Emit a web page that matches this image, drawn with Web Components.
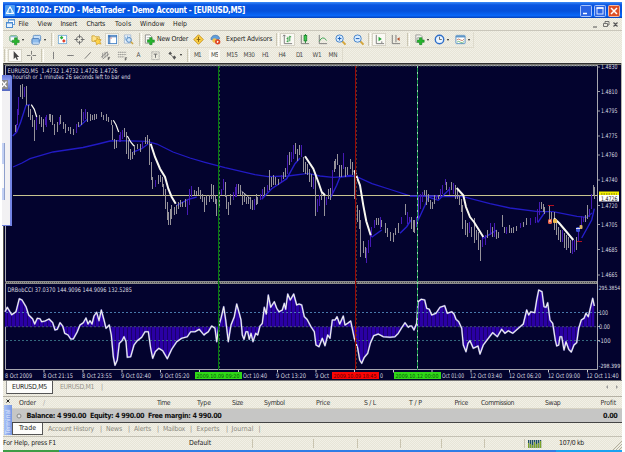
<!DOCTYPE html>
<html lang="en">
<head>
<meta charset="utf-8">
<title>MetaTrader</title>
<style>
  html, body { margin: 0; background: #fff; }
  body {
    width: 625px;
    height: 452px;
    overflow: hidden;
    font: 6.9px/1 "DejaVu Sans Condensed", "DejaVu Sans", sans-serif;
    color: #1c1c1c;
  }
</style>
</head>
<body>
<app-window></app-window>

<script>
const attach = (el, html) => {
  const tpl = document.createElement("template");
  tpl.innerHTML = html;
  el.attachShadow({ mode: "open" }).appendChild(tpl.content.cloneNode(true));
};

// Text squeezed or spread with letter-spacing until it fills its width
class FitText extends HTMLElement {
  constructor() {
    super();
    attach(this, `
      <style>
        :host { display: inline-block; flex: none; white-space: nowrap; }
        span { display: inline-block; }
      </style>
      <span><slot></slot></span>
    `);
  }

  connectedCallback() {
    const w = Number(this.getAttribute("w"));
    const span = this.shadowRoot.querySelector("span");
    this.style.width = w + "px";
    const n = this.textContent.length;
    const diff = w - span.getBoundingClientRect().width;
    if (n > 1) span.style.letterSpacing = (diff / n).toFixed(3) + "px";
  }
}

// [start, end, text] items become a flow row, each one spaced from the last
const textRow = (items, from) => {
  let pos = from;
  return items.map(([a, b, text, cls]) => {
    const html = `<fit-text class="${cls || ""}" w="${b - a}" style="margin-left:${a - pos}px">${text}</fit-text>`;
    pos = b;
    return html;
  }).join("");
};

const PLUS = (x, y) => `<path d="M${x} ${y}h2.6v2.5h2.5v2.6h-2.5v2.5h-2.6v-2.5h-2.5v-2.6h2.5z" fill="#27b52c" stroke="#138020" stroke-width=".6"/>`;

const ICONS = {
  newchart: `<rect x="1" y="2" width="8" height="6" rx="1" fill="#fff" stroke="#4c9a6a"/><path d="M2 3h6" stroke="#7fb2dc"/>` + PLUS(6, 4.2),
  profiles: `<rect x="2.5" y="1.5" width="8" height="6" rx="1" fill="#c7e0f8" stroke="#5e8fc6"/><rect x="1" y="5" width="8" height="6" rx="1" fill="#8fbcec" stroke="#4778b8"/><path d="M2 10h7" stroke="#e8f3ff"/>`,
  market: `<rect x="1.5" y="1.5" width="9" height="9" fill="#fff" stroke="#7aaed8"/><path d="M3 4l2-2 2 2-2 2z" fill="#2cac3a"/><path d="M5.5 7.5l2-2 2 2-2 2z" fill="#e0422c"/>`,
  data: `<circle cx="6" cy="6" r="3.5" fill="none" stroke="#777"/><path d="M6 .5v4M6 7.5v4M.5 6h4M7.5 6h4" stroke="#666"/>`,
  navigator: `<path d="M1 2h3l1 1h4v5H1z" fill="#ffe48c" stroke="#c79a23" stroke-width=".8"/><path d="M6.5 4l1.500 2.200 3-.2-1.300 2.500 1.300 2.500-2.800-.5-2.300 1.200-.3-2.600-1.800-1.800 2.400-.5z" fill="#ffd54a" stroke="#c08a14" stroke-width=".6"/>`,
  terminal: `<rect x="1.5" y="1.5" width="9" height="9" fill="#fff" stroke="#3f7fc4"/><path d="M3 1.5v9M1.5 3h9" stroke="#2d62ac"/><path d="M4 4.5h1" stroke="#d33"/>`,
  tester: `<path d="M1.5 1h7v9h-7z" fill="#eef5fc" stroke="#8ca8c8" stroke-width=".7"/><path d="M3 3v4M5 2v4M7 3v3" stroke="#4b8ec9" stroke-width=".7"/><circle cx="6.5" cy="6.5" r="2.6" fill="#cfe6fb" stroke="#4a7fb9"/><path d="M8.5 8.5l2.5 2.5" stroke="#c9a13a" stroke-width="1.5"/>`,
  order: `<path d="M1.5 1h5l2 2v7h-7z" fill="#fff" stroke="#777" stroke-width=".8"/><path d="M3 4h4M3 6h3" stroke="#999" stroke-width=".7"/>` + PLUS(6.2, 4),
  meta: `<path d="M6 .8l5.2 5.2L6 11.2.8 6z" fill="#fbd046" stroke="#c99315"/><path d="M6 3v3M4 6h4M6 6v2.6" stroke="#845f10"/>`,
  expert: `<path d="M1 6c0-6 9-6 9.500-1L8 7z" fill="#5f9edb" stroke="#356aa8" stroke-width=".7"/><circle cx="5" cy="7" r="2.500" fill="#f3c04b"/><circle cx="8.400" cy="8.500" r="2.900" fill="#dd4420"/><path d="M7.500 7v3l2.300-1.500z" fill="#fff"/>`,
  bars: `<path d="M2.500 1v9.500H11M1 2.500L2.500 1 4 2.500" fill="none" stroke="#777"/><path d="M5 5h1.500M6.500 3v6M8.500 2v6M8.500 3H10M6.500 8H5" stroke="#27983a"/>`,
  candles: `<path d="M2.500 1v9.500H11" fill="none" stroke="#777"/><path d="M7 0v10" stroke="#167c28"/><rect x="5.500" y="1.500" width="3" height="6" fill="#3fca4e" stroke="#167c28" stroke-width=".8"/>`,
  line: `<path d="M2.500 1v9.500H11" fill="none" stroke="#777"/><path d="M2.500 8Q6 1 10.500 7" fill="none" stroke="#35a04a"/>`,
  zoomin: `<path d="M7.500 7.500l4 4" stroke="#d2a234" stroke-width="2"/><circle cx="5" cy="5" r="4" fill="#d9edff" stroke="#3f7fc8"/><path d="M5 3v4M3 5h4" stroke="#1e62ba" stroke-width="1.100"/>`,
  zoomout: `<path d="M7.500 7.500l4 4" stroke="#d2a234" stroke-width="2"/><circle cx="5" cy="5" r="4" fill="#d9edff" stroke="#3f7fc8"/><path d="M3 5h4" stroke="#1e62ba" stroke-width="1.100"/>`,
  scroll: `<path d="M2.500 1v9.500H11M8.500 10V8" fill="none" stroke="#777"/><path d="M5 3v5l3.500-2.500z" fill="#22a535"/>`,
  shift: `<path d="M2.500 1v9.500H11M6.500 1v8" fill="none" stroke="#777"/><path d="M10.500 3.500v4L7.500 5.500z" fill="#b5502c"/>`,
  indicators: `<path d="M2 1h5l2 2v6H2z" fill="#f3f3ee" stroke="#888" stroke-width=".8"/><path d="M3 6q1.500-5 3 0" fill="none" stroke="#777" stroke-width=".7"/>` + PLUS(6, 4),
  period: `<circle cx="6" cy="6" r="4.600" fill="#eaf5ff" stroke="#2f6fc9" stroke-width="1.500"/><path d="M6 3v3h2.500" fill="none" stroke="#555" stroke-width=".9"/>`,
  template: `<rect x="1" y="1.500" width="10" height="9" rx=".6" fill="#fff" stroke="#568fc4"/><path d="M1 3h10" stroke="#568fc4" stroke-width="1.500"/><path d="M2 6.500q2-2 4 0t4-1" fill="none" stroke="#b95b38" stroke-width=".8"/><path d="M2 9q2-2 4 0t4-1" fill="none" stroke="#3f9e4d" stroke-width=".8"/>`,
  cursor: `<path d="M4 1v9l2-2 1.500 3 1.300-.7L7.400 7.500H10z" fill="#444"/>`,
  cross: `<path d="M6 1v4M6 7v4M1 6h4M7 6h4" stroke="#666" stroke-width=".9"/>`,
  vline: `<path d="M6 2v8" stroke="#777"/>`,
  hline: `<path d="M2.500 6h7" stroke="#777"/>`,
  trend: `<path d="M3 9.500L9.500 2.500" stroke="#777"/>`,
  channel: `<path d="M1 8l7-6M3 10l7-6M3 3v6M5.500 2v6M8 2v5" stroke="#777" stroke-width=".8"/><path d="M9 11V8h2M9 9.500h1.500" fill="none" stroke="#444" stroke-width=".8"/>`,
  fibo: `<path d="M1 2.500h9M1 5h9M1 7.500h7" stroke="#777" stroke-width=".8" stroke-dasharray="1.500 .5"/><path d="M9 11.500v-3h2M9 10h1.500" fill="none" stroke="#444" stroke-width=".8"/>`,
  label: `<rect x="2" y="2" width="8" height="8.500" fill="none" stroke="#888" stroke-width=".8" stroke-dasharray="1 .6"/><path d="M4 4.500h4M6 4.500v4" stroke="#666"/>`,
  arrows: `<path d="M1.500 4l2-2.500 2 2.500-2 1.500zM6 8l2-2 2 2-2 2.500z" fill="#555"/><path d="M4 5l3 3" stroke="#666" stroke-width=".8"/>`
};

class ToolIcon extends HTMLElement {
  constructor() {
    super();
    attach(this, `
      <style>
        :host { display: flex; flex: none; align-items: center; justify-content: center; height: 13px; box-sizing: border-box; }
        :host([pressed]) { background: #faf9f4; border: 1px solid #d6d3c6; }
        svg { flex: none; overflow: visible; }
        i { flex: none; margin-left: 2px; border: 1.5px solid transparent; border-top: 2px solid #222; border-bottom: 0; }
      </style>
      <svg width="11" height="11" viewBox="0 0 12 12"></svg>
    `);
  }

  connectedCallback() {
    this.style.width = this.getAttribute("w") + "px";
    this.shadowRoot.querySelector("svg").innerHTML = ICONS[this.getAttribute("name")];
    if (this.hasAttribute("drop")) this.shadowRoot.append(document.createElement("i"));
  }
}

class ToolGrip extends HTMLElement {
  constructor() {
    super();
    attach(this, `
      <style>
        :host { display: flex; flex: none; justify-content: center; width: 6px; height: 13px; gap: 1px; }
        b { width: 1px; background: #cbc7b4; }
        b + b { background: #fdfcf6; }
      </style>
      <b></b><b></b>
    `);
  }
}

class TitleBar extends HTMLElement {
  constructor() {
    super();
    attach(this, `
      <style>
        :host {
          display: flex;
          align-items: center;
          box-sizing: border-box;
          height: 16px;
          padding: 1px 2px 0 2px;
          background: linear-gradient(#3c8cf8 0, #0a55e2 18%, #0450da 55%, #0867f8 85%, #0640b8 100%);
          color: #fff;
          font-size: 8px;
          font-weight: bold;
        }
        .logo { margin-right: 1px; }
        fit-text { padding-top: 1px; }
        .buttons { display: flex; gap: 2px; margin-left: auto; }
        .buttons svg { background: #2b64e4; border: 1px solid #a8c4fa; border-radius: 1.5px; }
        .buttons svg:last-child { background: #de4f25; border-color: #f3b9a2; }
      </style>
      <svg class="logo" width="10" height="11" viewBox="0 0 10 11"><rect width="10" height="11" rx="1" fill="#4c9cf4"/><path d="M5 1.500l3.800 7H1.200z" fill="#9ed4ff" stroke="#fff"/><path d="M5 4v4" stroke="#1663bd"/></svg>
      <fit-text w="229">7318102: FXDD - MetaTrader - Demo Account - [EURUSD,M5]</fit-text>
      <div class="buttons">
        <svg width="10" height="10" viewBox="0 0 10 10"><path d="M2 7.500h4" stroke="#fff" stroke-width="1.600"/></svg>
        <svg width="10" height="10" viewBox="0 0 10 10"><rect x="2" y="2" width="6" height="6" fill="none" stroke="#dbe7ff"/><path d="M1.500 2h7" stroke="#fff" stroke-width="1.500"/></svg>
        <svg width="10" height="10" viewBox="0 0 10 10"><path d="M2 2l6 6M8 2L2 8" stroke="#fff" stroke-width="1.500"/></svg>
      </div>
    `);
  }
}

class MenuBar extends HTMLElement {
  constructor() {
    super();
    attach(this, `
      <style>
        :host { display: flex; align-items: center; box-sizing: border-box; height: 13px; padding: 0 1px 0 3px; border-bottom: 1px solid #c9c6ba; }
        fit-text { padding-top: 1px; }
        .mdi { margin-left: auto; }
      </style>
      <svg width="9" height="10" viewBox="0 0 9 10"><rect x="2.500" y=".5" width="6" height="5" fill="#fff" stroke="#68a0dc"/><rect x=".5" y="3.500" width="6" height="5" fill="#e6f3ff" stroke="#4d8bd0"/><path d="M1 4h6M3 1h6" stroke="#4d8bd0"/></svg>
      ${textRow([[18.5, 28.5, "File"], [37.5, 52, "View"], [60.5, 77, "Insert"], [86.5, 105, "Charts"],
        [115, 131.5, "Tools"], [140, 164.5, "Window"], [173, 187, "Help"]], 15)}
      <svg class="mdi" width="29" height="9" viewBox="0 0 29 9"><g fill="none" stroke="#555"><path d="M1 7h4M21.500 2.500l4 4M25.500 2.500l-4 4" stroke-width="1.200"/><path d="M11.500 3.500h4v3h-4zM13 3V1.500h4V5h-1" stroke-width=".8"/></g></svg>
    `);
  }
}

class ToolBars extends HTMLElement {
  constructor() {
    super();
    const icon = (name, w, attrs = "") => `<tool-icon name="${name}" w="${w}" ${attrs}></tool-icon>`;
    attach(this, `
      <style>
        :host { display: flex; flex-direction: column; box-sizing: border-box; height: 31px; padding-top: 1px; }
        div { display: flex; align-items: center; height: 16px; box-sizing: border-box; border-bottom: 1px solid #e0dccd; border-right: 1px solid #dedbcd; width: max-content; padding-left: 2px; }
        div + div { height: 14px; padding-left: 0; border-bottom: 0; font-size: 6.4px; color: #4c4c4c; }
        .a { width: 17px; text-align: center; }
        .on { background: #faf9f4; outline: 2.500px solid #faf9f4; }
      </style>
      <div>
        ${icon("newchart", 22, "drop")}${icon("profiles", 22, "drop")}<tool-grip></tool-grip>
        ${icon("market", 15)}${icon("data", 18)}${icon("navigator", 17)}${icon("terminal", 14, "pressed")}${icon("tester", 18)}<tool-grip></tool-grip>
        ${icon("order", 13)}<fit-text w="31" style="margin-left:1px">New Order</fit-text>
        ${icon("meta", 20)}${icon("expert", 15)}<fit-text w="46" style="margin-left:3px">Expert Advisors</fit-text><tool-grip style="margin-left:2px"></tool-grip>
        ${icon("bars", 15, "pressed")}${icon("candles", 18)}${icon("line", 18)}${icon("zoomin", 19)}${icon("zoomout", 16)}<tool-grip></tool-grip>
        ${icon("scroll", 14, "pressed")}${icon("shift", 19)}<tool-grip></tool-grip>
        ${icon("indicators", 20, "drop")}${icon("period", 21, "drop")}${icon("template", 21, "drop")}
      </div>
      <div>
        <tool-grip style="width:5px"></tool-grip>${icon("cursor", 14, "pressed")}${icon("cross", 19)}<tool-grip style="width:3px"></tool-grip>
        ${icon("vline", 18)}${icon("hline", 17)}${icon("trend", 17)}${icon("channel", 18)}${icon("fibo", 16)}
        <span class="a">A</span>${icon("label", 17)}${icon("arrows", 21, "drop")}<tool-grip></tool-grip>
        ${textRow([[194, 200.5, "M1"], [211, 218, "M5", "on"], [226.5, 237.5, "M15"], [243.5, 254.5, "M30"], [262, 268.5, "H1"],
          [278.5, 285.5, "H4"], [296, 302, "D1"], [312.5, 321.5, "W1"], [328.5, 337.5, "MN"]], 191)}
        <span style="width:4px"></span>
      </div>
    `);
  }
}

// Series are stored in thirds of a pixel; ox/oy is the origin of each stretch.
const SUB = 3;
const pts = (ox, oy, s) => s.trim().split(/\s+/).map(p => {
  const [x, y] = p.split(",").map(Number);
  return [ox + x / SUB, oy + y / SUB];
});
const toPath = list => "M" + list.map(([x, y]) => x.toFixed(1) + " " + y.toFixed(1)).join("L");

// x:high-low, a trailing p marks a rising (violet) bar
const BARS = [
  [0, 62, `46:190-210 49:185-212p 52:140-190p 56:105-160p 62:70-105 67:67-110 74:75-105p 80:72-130 84:130-165 90:140-175 96:160-195 104:175-238 110:165-205p 117:158-185 123:165-195 130:170-210 136:165-190p 140:160-195p 147:155-175 152:155-180 158:160-190 164:185-218 172:180-210 178:165-190p 182:160-185 190:180-200 197:185-212 205:195-208 212:195-215 220:200-218 228:185-212p 236:180-195 243:140-190 250:150-178p 257:140-170p 262:150-180 270:155-178 276:160-175 284:155-175 290:155-172 303:150-165 310:158-175 318:155-178 325:165-180 333:175-190 338:188-235 344:230-262 350:235-258 357:220-240p 362:210-240p 368:205-230p 373:198-225 378:210-275 384:235-290 391:262-295 397:270-290 404:250-280 412:245-262 420:245-270 428:240-258p 436:225-245 443:218-245 448:230-310 453:300-355 458:345-382 466:355-375p 474:340-365 480:338-360 486:345-375 491:365-400 496:380-440 501:420-475 504:450-490 510:440-490 515:430-470 522:435-458 528:428-455 534:420-440 540:415-435 547:420-435 555:410-435 562:410-460p 568:380-430p 575:372-405p 582:385-400 590:388-400 596:375-400 602:385-410 608:395-420 613:405-450 619:400-430`],
  [205, 62, `5:400-415 12:400-420 20:365-410 25:370-420 30:400-425 34:410-462 42:390-435 48:380-400p 54:350-385p 60:360-405 65:400-440 70:420-458 76:395-430 85:390-415p 90:375-405p 94:365-405p 100:365-395 105:370-400 111:390-430 117:395-420 123:405-425 129:405-425 135:405-440 141:415-445 147:410-445p 153:395-430 158:405-425 165:395-415p 172:380-410p 178:375-400 186:370-390p 192:325-385 198:345-375 205:338-370 212:345-368 220:350-370 228:340-362p 236:330-350 240:318-345 246:280-335p 252:270-310 258:270-300p 264:250-290p 270:243-275 277:260-298 284:250-280 290:248-285p 296:285-330 302:300-335 308:305-340 314:320-360 320:335-375 326:345-380p 332:335-462 338:410-450p 344:400-432p 350:385-415 358:395-463 364:405-430p 370:380-410 376:378-415 382:325-400p 387:298-330 392:290-320 397:275-310 403:310-345 409:310-345 415:272-320p 421:315-345 428:315-340 436:292-320 442:300-340 447:325-410 452:395-435 457:430-480 463:445-500 515:467-490 525:465-500p 590:465-485p 600:427-460 607:450-485p 613:465-480p`],
  [205, 220, `466:0-112 474:62-100 480:80-115 485:85-130p 490:60-100p 495:40-80p 500:20-50p 508:0-25p 520:-5-15 530:0-20 540:10-40 548:25-50 555:35-62 565:38-65 572:25-45 580:10-40 590:-3-12p 618:0-20 625:0-35`],
  [410, 62, `5:465-500 25:400-470p 30:395-440p 36:390-420p 42:385-400 48:385-430 54:395-420 60:415-440 66:420-442 72:400-425 78:400-415p 85:400-410 90:380-405p 97:370-395p 105:350-370p 110:360-385 117:375-400p 123:360-385 129:362-395p 135:370-410 141:385-410 147:400-430 153:410-450 158:430-500 277:458-490 383:440-480p 388:420-460p 393:420-440 400:425-450 404:435-455 418:430-480 424:450-475 432:450-504 515:462-500p 520:465-480p 527:460-480 533:430-470 538:440-465p 543:395-440p 549:370-400 553:375-410`],
  [410, 220, `12:0-40 18:-10-20p 167:0-45 172:10-50 178:5-40p 185:20-50 194:-5-68 200:30-60 206:35-90 211:60-122 217:50-80p 225:45-75p 232:30-55 240:10-45p 246:20-50 252:10-50p 260:30-58 266:35-55 277:-10-20 284:20-40 290:20-42p 297:15-40 304:25-40 310:20-38 320:18-32 330:10-25p 340:5-20 350:-5-15 360:-5-15p 375:-10-10p 438:5-45 444:20-60 450:30-65 458:30-65p 464:40-85 470:45-90 476:50-85 481:60-100 487:60-103p 492:60-95p 498:50-90 505:30-65p`]
];

const SLOW = [
  [13, 167], [22, 163], [30, 158.7], [53, 152], [83, 147.5], [98, 144], [110, 141], [120, 140.7], [147, 141.3], [157, 144], [173, 152],
  [190, 158], [205, 162.300], [225, 167.700], [255, 174.700], [268, 176.700], [288, 176], [308, 173.300], [320, 176], [333, 177.300],
  [355, 176], [372, 183.700], [392, 190], [410, 195.800], [437, 196.700], [463, 196.700], [490, 203.700], [510, 208], [538, 211.700],
  [553, 211.700], [577, 216.300], [587, 217.300], [592, 213]
];

const FALLING = [
  pts(0, 62, "94,128 103,142 110,165"), pts(0, 62, "340,175 348,188 356,210"), pts(0, 62, "382,222 392,240 402,252"),
  pts(0, 62, "452,245 465,285 480,320 495,345 505,380 515,405 527,425"),
  pts(205, 62, "300,283 325,320 340,360 350,390 360,400"),
  pts(205, 62, "448,325 465,370 475,430 484,478 497,520"),
  pts(410, 62, "140,378 160,400 168,435 180,465 192,480 220,525"),
  pts(410, 220, "432,-5 448,10 465,30 490,60")
];

const RISING = [
  pts(0, 62, "38,222 50,210 62,180 78,130 90,128"), pts(0, 62, "236,195 262,172"), pts(0, 62, "400,270 425,260 445,245"),
  pts(0, 62, "530,430 565,412 590,405"), pts(205, 62, "170,412 200,380 245,350 270,305 285,288"),
  pts(205, 62, "375,410 395,370 405,345 440,340"), pts(205, 220, "500,52 530,30"), pts(205, 220, "585,40 605,20 618,0"),
  pts(410, 62, "22,480 45,430 55,405 85,415 110,390 120,380"), pts(410, 62, "0,402 85,402"),
  pts(410, 220, "220,55 260,30"), pts(410, 62, "383,482 405,450"), pts(410, 62, "515,528 545,474 553,440")
];

const CCI = [
  ...pts(0, 220, `15,275 22,262 35,284 48,275 58,236 66,240 78,260 86,285 98,297 104,312 112,295 120,296 125,305 135,303 147,297 158,308 165,330 172,328 180,308 188,318 194,340 204,345 212,357 220,357 232,335 240,315 250,308 258,294 264,312 270,302 276,312 282,288 290,277 297,302 304,270 312,300 318,325 328,315 334,345 340,410 345,436 352,420 358,370 366,362 372,350 378,365 382,412 392,410 402,375 412,362 425,352 435,335 445,335 452,385 458,415 466,395 476,385 488,392 502,416 515,388 530,365 545,355 562,350 572,335 585,335 598,328 612,345`),
  ...pts(205, 220, `0,342 10,335 20,318 30,325 35,365 42,315 48,295 56,260 62,300 70,365 78,315 88,290 95,252 103,280 108,300 112,345 117,358 123,335 128,335 133,358 138,340 144,365 152,340 158,345 165,318 172,310 178,262 184,282 190,225 197,262 208,245 215,265 222,275 232,270 238,250 242,268 248,222 256,240 266,222 275,255 282,252 290,255 298,290 306,298 318,320 328,335 333,375 342,380 352,355 360,377 368,345 375,355 382,300 390,300 396,290 404,312 415,288 420,315 428,310 437,303 448,355 458,385 464,420 470,430 478,412 488,400 496,370 506,347 520,342 535,350 555,352 570,350 580,340 592,320 600,308 610,322`),
  ...pts(410, 220, `0,318 5,318 12,330 20,310 24,245 34,238 44,240 50,265 58,268 65,285 78,280 90,262 104,257 112,280 125,275 132,282 138,298 146,305 155,325 160,375 168,395 174,370 180,362 190,385 204,378 210,402 220,375 235,355 248,338 262,350 275,328 285,340 295,332 308,340 325,325 340,312 350,270 356,285 362,275 374,278 380,240 386,210 396,215 402,260 408,262 413,248 420,300 428,310 436,360 440,378 446,375 450,350 455,350 462,390 468,365 476,388 484,396 492,375 500,368 506,325 514,300 522,295 528,280 535,290 542,260 548,235 553,258`)
];

class PriceChart extends HTMLElement {
  constructor() {
    super();
    attach(this, `
      <style>
        :host { display: block; height: 318px; background: #03032e; }
        svg { display: block; }
        text { font: 6.300px "DejaVu Sans Condensed", "DejaVu Sans", sans-serif; fill: #d4d4d8; }
      </style>
      <svg width="619" height="318" viewBox="3 62 619 318">${this.draw()}</svg>
    `);
  }

  text(x, y, w, str, fill = "#dcdce0", size = 6.3) {
    return `<text x="${x}" y="${y}" textLength="${w}" lengthAdjust="spacingAndGlyphs" style="fill:${fill};font-size:${size}px">${str}</text>`;
  }

  draw() {
    const bars = { g: "", p: "" };
    for (const [ox, oy, data] of BARS) {
      for (const b of data.split(" ")) {
        const m = b.match(/^(\d+):(-?\d+)-(\d+)(p?)$/);
        const x = Math.floor(ox + m[1] / SUB) + 0.5;
        bars[m[4] || "g"] += `M${x} ${Math.round(oy + m[2] / SUB)}V${Math.round(oy + m[3] / SUB)}`;
      }
    }

    const zero = 326.7;
    const area = toPath([[5, zero], ...CCI, [594.3, zero]]) + "Z";

    const prices = [["1.4830", 67], ["1.4810", 91.5], ["1.4795", 111], ["1.4775", 136], ["1.4760", 155], ["1.4740", 180],
      ["1.4720", 205.5], ["1.4705", 224.5], ["1.4685", 249.5], ["1.4665", 275]];
    const dates = [["8 Oct 2009", 5, 27], ["8 Oct 21:15", 43, 30], ["8 Oct 23:55", 82, 30], ["9 Oct 02:40", 121, 30], ["9 Oct 05:20", 160, 29.5],
      ["Oct 10:40", 243, 24], ["9 Oct 13:20", 276, 30], ["9 Oct", 315, 14], ["0", 380, 3], ["Oct 01:00", 442, 22],
      ["12 Oct 03:40", 470, 32], ["12 Oct 06:20", 509, 32], ["12 Oct 09:00", 548, 32], ["12 Oct 11:40", 586.5, 32]];
    const ticks = [44, 83, 122, 160.5, 199.5, 238.5, 277.500, 316, 354.500, 393.500, 432, 471, 509.500, 548.500, 587.500];

    return `
      <defs>
        <pattern id="hist" width="4" height="4" patternUnits="userSpaceOnUse">
          <rect width="4" height="4" fill="#2a00a4"/><rect x="3" width="1" height="4" fill="#1b006c"/>
        </pattern>
      </defs>
      <rect x="3" y="62" width="619" height="1" fill="#efeee6"/>
      <rect x="3" y="63" width="619" height="1" fill="#303030"/>
      <rect x="3" y="64" width="619" height="1" fill="#77776f"/>
      <path d="M3.500 63V380" stroke="#55554f"/><path d="M621.500 63V380" stroke="#b4b4ac"/>
      <path d="M5.500 65.500H597.500V369.500H5.500Z" fill="none" stroke="#a8a8b0"/>
      <path d="M6 66.200H597" stroke="#2f3a40" stroke-dasharray="2 1"/>
      <rect x="5" y="281" width="592" height="3" fill="#8c8c8c"/><path d="M5 282.500H597" stroke="#4a4a4a" stroke-dasharray="1 1"/>

      <path d="${toPath(SLOW)}" fill="none" stroke="#221ac4" stroke-width="1.300"/>
      <path d="M13 195.500H598" stroke="#c8c490"/>
      ${RISING.map(l => `<path d="${toPath(l)}" fill="none" stroke="#261ecc" stroke-width="1.400"/>`).join("")}
      <path d="${bars.p}" stroke="#4519b4" fill="none"/>
      <path d="${bars.g}" stroke="#96939a" fill="none"/>
      ${FALLING.map((l, i) => `<path d="${toPath(l)}" fill="none" stroke="#f8f8f0" stroke-width="${i < 3 ? 1.2 : 2}"/>`).join("")}
      <path d="${toPath(pts(205, 62, "110,388 125,400 135,410"))}" fill="none" stroke="#ddd" stroke-width=".8"/>

      <path d="M548 205.500h6M577 241.500h5" stroke="#b01020"/>
      <rect x="548" y="219" width="4" height="5" rx="1.500" fill="#f0684c"/><rect x="553" y="219" width="4" height="4" rx="1" fill="#f0c050"/>
      <path d="M549 221h2" stroke="#fff"/>
      <rect x="576" y="227" width="4" height="5" rx="1.500" fill="#3c50d8"/><rect x="579.500" y="225" width="3" height="4" rx="1" fill="#d8b068"/>
      <path d="M576 228.500h4" stroke="#dde"/>

      <path d="${area}" fill="url(#hist)"/>
      <path d="M6 312.500H597" stroke="#4f86b8" stroke-dasharray="2 2" stroke-width=".9"/>
      <path d="M6 326.700H597" stroke="#4a5878" stroke-dasharray="2 2" stroke-width=".9"/>
      <path d="M6 340.500H597" stroke="#3b7588" stroke-dasharray="2 2" stroke-width=".9"/>
      <path d="${toPath(CCI)}" fill="none" stroke="#8f88f0" stroke-width="1.900" stroke-linejoin="round" opacity=".6"/>
      <path d="${toPath(CCI)}" fill="none" stroke="#f2f2ee" stroke-width="1.100" stroke-linejoin="round"/>

      <path d="M218.500 66V370" stroke="#067c10"/><path d="M219.500 66V370" stroke="#2c6a34" stroke-dasharray="2 2"/>
      <path d="M355.500 66V370" stroke="#980808"/><path d="M356.500 66V370" stroke="#50352c" stroke-dasharray="2 2"/>
      <path d="M417.500 66V370" stroke="#189848"/><path d="M417.500 66V370" stroke="#9ad8b0" stroke-dasharray="2 4"/>

      ${this.text(7.5, 73, 110, "EURUSD,M5&#160; 1.4732 1.4732 1.4726 1.4726")}
      ${this.text(12.5, 79, 118, "hourish or 1 minutes 26 seconds left to bar end")}
      ${this.text(7.5, 291.5, 124.5, "DRBobCCI 37.0370 144.9096 144.9096 132.5285")}

      ${prices.map(([p, y]) => `<path d="M597 ${y}h3" stroke="#a8a8b0" stroke-width=".9"/>` + this.text(601, y + 2.3, 16.5, p)).join("")}
      <rect x="599" y="191.500" width="20" height="4" fill="#f4f000"/>
      <path d="M601 194h16" stroke="#6c6a10" stroke-dasharray="1.500 1"/>
      <rect x="599" y="195" width="20" height="6.500" fill="#fff"/>
      ${this.text(601, 200.6, 16.5, "1.4726", "#111")}
      ${this.text(598.7, 290, 21.5, "295.3854", "#dcdce0", 5.8)}
      <path d="M597 312.500h3M597 326.500h3M597 340.500h3" stroke="#a8a8b0"/>
      ${this.text(599, 314.6, 9, "100")}${this.text(599, 328.9, 11, "0.00")}${this.text(598.5, 342.8, 12, "-100")}
      ${this.text(598.7, 368, 21.500, "-298.399", "#dcdce0", 5.8)}

      <path d="${ticks.map(x => `M${x} 370v2.500`).join("")}" stroke="#c8c8cc"/>
      ${dates.map(([t, x, w]) => this.text(x, 378, w, t)).join("")}
      ${[[195, "#30d818", "2009.10.09 09:20"], [332, "#fb0505", "2009.10.09 18:45"], [394, "#30d818", "2009.10.12 00:00"]].map(([x, c, t]) =>
        `<rect x="${x}" y="372" width="47" height="7" fill="${c}"/>` + this.text(x + 1.500, 377.800, 43, t, c === "#fb0505" ? "#5a0000" : "#085808", 5.6)).join("")}
    `;
  }
}

// Collapsed tool panel that floats over the chart's left edge
class SidePanel extends HTMLElement {
  constructor() {
    super();
    attach(this, `
      <style>
        :host {
          display: flex;
          flex-direction: column;
          box-sizing: border-box;
          width: 10px;
          height: 151px;
          background: #f2f1f3;
          border-right: 2px solid #7384e4;
          border-bottom: 1.500px solid #6f80dc;
          border-radius: 0 2px 0 0;
          overflow: hidden;
        }
        header { height: 16px; background: linear-gradient(#6678da, #90a0f0 40%, #5467c0); }
        header svg { display: block; margin-top: 5px; background: #8b8b8b; }
        .a { height: 52px; }
        .b { height: 21px; background: #c3d1f4; }
        .c { height: 24px; background: #fafafa; }
        .d { height: 12px; background: #c3d1f4; }
        .b, .c, .d { margin-right: 5px; border-right: 1px solid #8fa0cc; }
      </style>
      <header><svg width="6" height="9" viewBox="0 0 6 9"><path d="M0 1.500l4.500 5.500M4.500 1.500L0 7" stroke="#fff" stroke-width="1.200"/></svg></header>
      <div class="a"></div><div class="b"></div><div class="c"></div><div class="d"></div>
    `);
  }
}

class ChartTabs extends HTMLElement {
  constructor() {
    super();
    attach(this, `
      <style>
        :host { display: flex; align-items: flex-start; box-sizing: border-box; height: 16px; border-top: 1px solid #777; padding-left: 3px; }
        .tab { display: flex; align-items: center; box-sizing: border-box; height: 13px; width: 47px; padding-left: 5px; background: #fdfdfb; border: 1px solid #555; border-top: 0; border-left-color: #999; }
        .rest { display: flex; align-items: center; flex: 1; height: 12px; color: #96948a; }
        .arrows { margin-left: auto; margin-right: 3px; }
      </style>
      <div class="tab"><fit-text w="35">EURUSD,M5</fit-text></div>
      <div class="rest">${textRow([[60, 94, "EURUSD,M1"], [101, 103, "|"]], 53)}
        <svg class="arrows" width="14" height="6" viewBox="0 0 14 6"><path d="M3 1v4L1 3zM11 1v4l2-2z" fill="#999"/></svg>
      </div>
    `);
  }
}

class TerminalPane extends HTMLElement {
  constructor() {
    super();
    attach(this, `
      <style>
        :host { display: flex; box-sizing: border-box; height: 41px; border-top: 1px solid #b5b1a4; border-bottom: 1px solid #c4c1b4; }
        aside { display: flex; flex-direction: column; width: 9px; align-items: center; }
        aside svg { height: 8px; flex: none; }
        .name { flex: none; box-sizing: border-box; width: 8px; height: 30px; background: linear-gradient(90deg, #7898e4, #a9c1f4); color: #e3ecff; font-size: 6.500px; writing-mode: vertical-rl; transform: rotate(180deg); line-height: 8px; padding-top: 1px; overflow: hidden; }
        main { flex: 1; display: flex; flex-direction: column; }
        .head, .balance, .tabs { display: flex; align-items: center; }
        .head { height: 12px; padding-top: 1px; border-bottom: 1px solid #d6d2c3; color: #333; box-sizing: border-box; }
        .balance { height: 14px; background: #c6c6c5; border-bottom: 1px solid #444; box-sizing: border-box; font-weight: bold; font-size: 7.200px; color: #111; }
        .balance svg { margin-left: 4px; }
        .tabs { height: 12px; color: #8a887e; }
        .tab { display: flex; align-items: center; box-sizing: border-box; width: 31px; height: 12px; padding-left: 6px; background: #fdfdfb; border: 1px solid #555; border-top: 0; color: #222; }
        .slash { color: #aaa; }
      </style>
      <aside>
        <svg width="6" height="8" viewBox="0 0 6 8"><path d="M1.500 2.500l3 3M4.500 2.500l-3 3" stroke="#222"/></svg>
        <div class="name">Terminal</div>
      </aside>
      <main>
        <div class="head">${textRow([[19, 36, "Order"], [43, 46, "/", "slash"], [157, 170, "Time"], [197, 211, "Type"], [232, 243, "Size"],
          [264, 284.5, "Symbol"], [316, 330, "Price"], [364, 376, "S / L"], [409, 422, "T / P"], [454.5, 468, "Price"],
          [481, 514, "Commission"], [545, 560.5, "Swap"], [600.5, 616, "Profit"]], 12)}</div>
        <div class="balance">
          <svg width="6" height="6" viewBox="0 0 6 6"><circle cx="3" cy="3" r="2" fill="#e4e4e4" stroke="#888"/></svg>
          ${textRow([[26.5, 221.500, "Balance: 4 990.00&#160; Equity: 4 990.00&#160; Free margin: 4 990.00"], [603, 617.5, "0.00"]], 22)}
        </div>
        <div class="tabs">
          <div class="tab"><fit-text w="17">Trade</fit-text></div>
          ${textRow([[48, 94, "Account History"], [100, 102, "|"], [106, 122, "News"], [128, 130, "|"], [134, 151, "Alerts"], [157, 159, "|"],
            [163, 185, "Mailbox"], [190, 192, "|"], [196.5, 219.5, "Experts"], [226, 228, "|"], [231.5, 253.5, "Journal"], [258.5, 260.5, "|"]], 43)}
        </div>
      </main>
    `);
  }
}

class StatusBar extends HTMLElement {
  constructor() {
    super();
    attach(this, `
      <style>
        :host { display: flex; align-items: center; height: 13px; }
        i { flex: none; width: 1px; height: 9px; background: #c9c4b0; }
        .grip { margin-left: auto; align-self: flex-end; }
      </style>
      ${textRow([[3, 56, "For Help, press F1"], [189, 211, "Default"]], 3)}
      <i style="margin-left:41px"></i><i style="margin-left:60px"></i><i style="margin-left:43px"></i><i style="margin-left:42px"></i>
      <i style="margin-left:40px"></i><i style="margin-left:42px"></i><i style="margin-left:39px"></i>
      <svg style="margin-left:3px" width="15" height="8" viewBox="0 0 15 8">
        <path d="M.5 0v8M2.500 0v8M4.500 0v8M6.500 0v8M8.500 0v8M10.500 0v8M12.500 0v8" stroke="#1c4c64" stroke-width="1.400"/>
        <path d="M.5 3v5M2.500 4v4M4.500 5v3M6.500 2v6M8.500 4v4M10.500 3v5M12.500 1v7" stroke="#7da428" stroke-width="1.200"/>
      </svg>
      <fit-text w="25" style="margin-left:16px">107/0 kb</fit-text>
      <svg class="grip" width="9" height="9" viewBox="0 0 9 9"><path d="M0 9l9-9M3 9l6-6M6 9l3-3" stroke="#b4b09e"/></svg>
    `);
  }
}

class AppWindow extends HTMLElement {
  constructor() {
    super();
    attach(this, `
      <style>
        :host { display: flex; flex-direction: column; position: relative; box-sizing: border-box; width: 622px; height: 452px; padding: 2px 0 0 3px; }
        .frame { display: flex; flex-direction: column; background-color: #e7e5d7; background-image: conic-gradient(#f2f0e7 25%, transparent 0 50%, #f2f0e7 0 75%, transparent 0); background-size: 2px 2px; }
        side-panel { position: absolute; left: 2px; top: 75px; }
        .taskbar { height: 2px; background: linear-gradient(90deg, #3d9c46 56px, #2f7de6 56px 553px, #1ba2f0 553px); }
      </style>
      <div class="frame">
        <title-bar></title-bar>
        <menu-bar></menu-bar>
        <tool-bars></tool-bars>
        <price-chart></price-chart>
        <chart-tabs></chart-tabs>
        <terminal-pane></terminal-pane>
        <status-bar></status-bar>
        <div class="taskbar"></div>
      </div>
      <side-panel></side-panel>
    `);
  }
}

customElements.define("fit-text", FitText);
customElements.define("tool-icon", ToolIcon);
customElements.define("tool-grip", ToolGrip);
customElements.define("title-bar", TitleBar);
customElements.define("menu-bar", MenuBar);
customElements.define("tool-bars", ToolBars);
customElements.define("price-chart", PriceChart);
customElements.define("side-panel", SidePanel);
customElements.define("chart-tabs", ChartTabs);
customElements.define("terminal-pane", TerminalPane);
customElements.define("status-bar", StatusBar);
customElements.define("app-window", AppWindow);
</script>
</body>
</html>
